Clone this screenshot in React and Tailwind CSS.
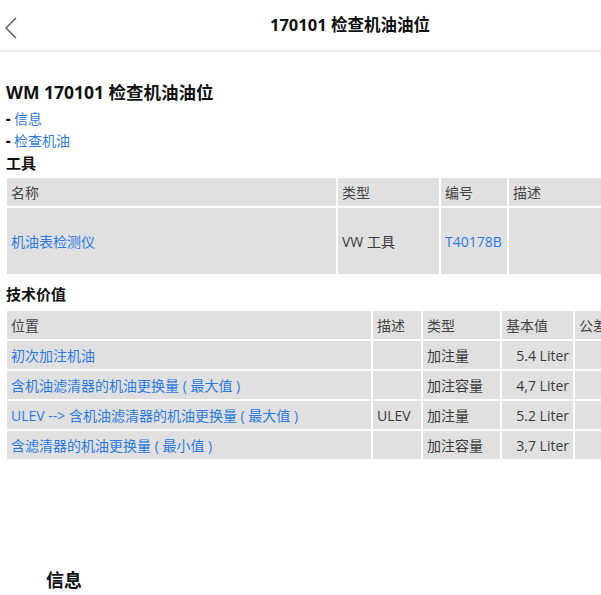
import React from 'react'

const FONT = { fontFamily: '"Open Sans", "Noto Sans CJK SC", sans-serif' }

const tools = [{ name: '机油表检测仪', type: 'VW 工具', code: 'T40178B', desc: '' }]

const values = [
  { pos: '初次加注机油', desc: '', type: '加注量', val: '5.4 Liter' },
  { pos: '含机油滤清器的机油更换量 ( 最大值 )', desc: '', type: '加注容量', val: '4,7 Liter' },
  { pos: 'ULEV --> 含机油滤清器的机油更换量 ( 最大值 )', desc: 'ULEV', type: '加注量', val: '5.2 Liter' },
  { pos: '含滤清器的机油更换量 ( 最小值 )', desc: '', type: '加注容量', val: '3,7 Liter' },
]

function Header(){
  return (
    <div className="h-[52px] flex items-center border-b-2 border-[#eeeeee] relative">
      <svg className="absolute left-[4px] top-[17px]" width="14" height="22" viewBox="0 0 14 22" fill="none">
        <path d="M12 1 L2 11 L12 21" stroke="#555" strokeWidth="1.4" />
      </svg>
      <div className="w-full pl-[270px] text-[16.5px] font-bold text-[#111]">170101 检查机油油位</div>
    </div>
  )
}

export default function App(){
  return (
    <div className="w-[601px] h-[595px] overflow-hidden bg-white text-[#3a3a3a]" style={FONT}>
      <Header />
      <div className="pl-[6px] pt-[27px]">
        <h1 className="text-[17.5px] font-bold text-[#111] leading-[26px]">WM 170101 检查机油油位</h1>
        <div className="mt-[3px] text-[14px] leading-[22px]">
          <div><span className="font-extrabold text-black">- </span><span className="text-[#2a7ae2]">信息</span></div>
          <div><span className="font-extrabold text-black">- </span><span className="text-[#2a7ae2]">检查机油</span></div>
        </div>
        <div className="text-[15px] font-bold text-[#111] leading-[22px]">工具</div>

        <table className="border-separate border-spacing-[2px] text-[14px] w-[640px] mt-[2px] -ml-[1px] table-fixed">
          <colgroup>
            <col className="w-[329px]" />
            <col className="w-[101px]" />
            <col className="w-[66px]" />
            <col />
          </colgroup>
          <thead>
            <tr className="h-[28px]">
              {['名称', '类型', '编号', '描述'].map(h => (
                <th key={h} className="bg-[#e0e0e0] text-left font-normal px-[4px] text-[#444]">{h}</th>
              ))}
            </tr>
          </thead>
          <tbody>
            {tools.map(t => (
              <tr key={t.code} className="h-[66px]">
                <td className="bg-[#e0e0e0] px-[4px] text-[#2a7ae2]">{t.name}</td>
                <td className="bg-[#e0e0e0] px-[4px]">{t.type}</td>
                <td className="bg-[#e0e0e0] px-[4px] text-[#2a7ae2]">{t.code}</td>
                <td className="bg-[#e0e0e0] px-[4px]">{t.desc}</td>
              </tr>
            ))}
          </tbody>
        </table>

        <div className="text-[15px] font-bold text-[#111] leading-[22px] mt-[7px]">技术价值</div>

        <table className="border-separate border-spacing-[2px] text-[14px] w-[660px] mt-[4px] -ml-[1px] table-fixed">
          <colgroup>
            <col className="w-[364px]" />
            <col className="w-[48px]" />
            <col className="w-[77px]" />
            <col className="w-[71px]" />
            <col />
          </colgroup>
          <thead>
            <tr className="h-[28px]">
              {['位置', '描述', '类型', '基本值', '公差'].map(h => (
                <th key={h} className="bg-[#e0e0e0] text-left font-normal px-[4px] text-[#444] whitespace-nowrap">{h}</th>
              ))}
            </tr>
          </thead>
          <tbody>
            {values.map(v => (
              <tr key={v.pos} className="h-[28px]">
                <td className="bg-[#e0e0e0] px-[4px] text-[#2a7ae2] whitespace-nowrap">{v.pos}</td>
                <td className="bg-[#e0e0e0] px-[4px]">{v.desc}</td>
                <td className="bg-[#e0e0e0] px-[4px]">{v.type}</td>
                <td className="bg-[#e0e0e0] px-[4px] text-right">{v.val}</td>
                <td className="bg-[#e0e0e0] px-[4px]"></td>
              </tr>
            ))}
          </tbody>
        </table>

        <div className="pl-[40px] mt-[106px] text-[18px] font-bold text-[#111]">信息</div>
      </div>
    </div>
  )
}
